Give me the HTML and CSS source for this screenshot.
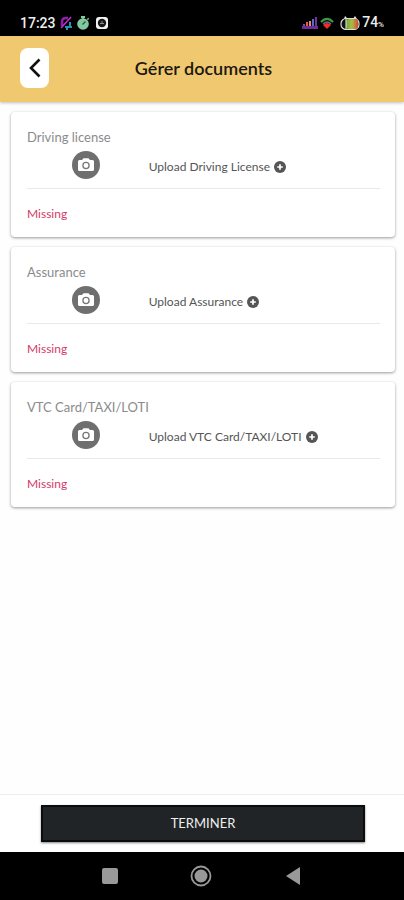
FILE: index.html
```html
<!DOCTYPE html>
<html lang="fr">
<head>
<meta charset="utf-8">
<meta name="viewport" content="width=device-width, initial-scale=1">
<title>Gérer documents</title>
<link rel="stylesheet" href="styles.css">
</head>
<body>
<svg class="symbols" aria-hidden="true">
  <symbol id="camera" viewBox="0 0 28 28">
    <circle cx="14" cy="14" r="14" fill="#6f6f6f"/>
    <path d="M7.500 9H10l1.500-1.800h5L18 9h2.500Q22 9 22 10.500v8q0 1.500-1.500 1.500h-13Q6 20 6 18.500v-8Q6 9 7.500 9z" fill="#fff"/>
    <circle cx="14" cy="14.500" r="3.100" fill="#fff" stroke="#777" stroke-width="1.300"/>
  </symbol>
  <symbol id="plus" viewBox="0 0 12 12">
    <circle cx="6" cy="6" r="6" fill="#555"/>
    <path d="M6 3.200v5.600M3.200 6h5.600" stroke="#fff" stroke-width="1.700"/>
  </symbol>
</svg>
<div class="status">
  <div class="status-group">
    <span class="time">17:23</span>
    <svg class="status-icon" viewBox="0 0 14 14"><path d="M3 10V6q0-4 4-4h2" fill="none" stroke="#8d20a8" stroke-width="2.600"/><path d="M6 11h5V6" fill="none" stroke="#2693b5" stroke-width="2"/><path d="M7 13h2M11 11h2" stroke="#2693b5" stroke-width="2"/><path d="M2 12 12 1" stroke="#c02fd8" stroke-width="1.500"/></svg>
    <svg class="status-icon" viewBox="0 0 14 14"><circle cx="7" cy="8" r="5.800" fill="#83c9a0"/><path d="M5 1h4M7 1v2M11.500 2.500l1 1" stroke="#83c9a0" stroke-width="1.800"/><path d="m6.500 8.500 3-3" stroke="#285f43" stroke-width="1.500"/></svg>
    <svg class="status-icon alarm" viewBox="0 0 14 14"><rect x="1" y="1" width="12" height="12" rx="3" fill="#f1f1f1"/><circle cx="7" cy="7" r="4.200" fill="#171717"/><path d="M5 7.500h4M7 5v2" stroke="#888"/></svg>
  </div>
  <div class="status-group status-right">
    <svg class="signal" viewBox="0 0 16 14"><path d="M0 11.500h16" stroke="#712a98" stroke-width="3"/><path d="M2 10V8" stroke="#8740ad" stroke-width="2"/><path d="M5 10V6" stroke="#e35a4d" stroke-width="2"/><path d="M8 10V5" stroke="#e98b62" stroke-width="2"/><path d="M11 10V3" stroke="#5368da" stroke-width="2"/><path d="M14 10V1" stroke="#713695" stroke-width="2"/></svg>
    <svg class="status-icon" viewBox="0 0 14 14"><path d="M1 6q6-6 12 0" fill="none" stroke="#3f9b3f" stroke-width="2.200"/><path d="M3 8q4-4 8 0" fill="none" stroke="#4b7295" stroke-width="1.600"/><path d="m7 13-4-4Q7 5 11 9z" fill="#ef2d26"/></svg>
    <svg class="battery" viewBox="0 0 20 14"><defs><linearGradient id="charge"><stop stop-color="#6fa832"/><stop offset=".5" stop-color="#a9bd45"/><stop offset="1" stop-color="#d94732"/></linearGradient></defs><path d="M4 3 5 0l3 3h5l2-3 2 3" fill="#eee"/><rect x="1" y="2.500" width="18" height="11" rx="5" fill="#111" stroke="#ddd" stroke-width="1.200"/><rect x="6" y="3" width="12" height="10" rx="2" fill="url(#charge)"/><path d="M6 3v10" stroke="#eee"/></svg>
    <span class="charge">74<small>%</small></span>
  </div>
</div>
<header class="header">
  <button class="back" type="button" aria-label="Retour"><svg viewBox="0 0 12 20"><path d="M10.500 1.500 2 10l8.500 8.500" fill="none" stroke="#111" stroke-width="2.600"/></svg></button>
  <h1>Gérer documents</h1>
</header>
<main class="documents">
  <section class="card">
    <h2>Driving license</h2>
    <div class="row">
      <svg class="camera" aria-hidden="true"><use href="#camera"/></svg>
      <button class="upload" type="button">Upload Driving License <svg aria-hidden="true"><use href="#plus"/></svg></button>
    </div>
    <p class="state">Missing</p>
  </section>
  <section class="card">
    <h2>Assurance</h2>
    <div class="row">
      <svg class="camera" aria-hidden="true"><use href="#camera"/></svg>
      <button class="upload" type="button">Upload Assurance <svg aria-hidden="true"><use href="#plus"/></svg></button>
    </div>
    <p class="state">Missing</p>
  </section>
  <section class="card">
    <h2>VTC Card/TAXI/LOTI</h2>
    <div class="row">
      <svg class="camera" aria-hidden="true"><use href="#camera"/></svg>
      <button class="upload" type="button">Upload VTC Card/TAXI/LOTI <svg aria-hidden="true"><use href="#plus"/></svg></button>
    </div>
    <p class="state">Missing</p>
  </section>
</main>
<footer class="footer"><button class="finish" type="button">TERMINER</button></footer>
<nav class="system-nav" aria-label="Système">
  <button type="button" aria-label="Applications récentes"><svg viewBox="0 0 22 22"><rect x="3" y="3" width="16" height="16" rx="2" fill="#999"/></svg></button>
  <button type="button" aria-label="Accueil"><svg viewBox="0 0 22 22"><circle cx="11" cy="11" r="9.500" fill="none" stroke="#999" stroke-width="1.800"/><circle cx="11" cy="11" r="6.500" fill="#999"/></svg></button>
  <button type="button" aria-label="Précédent"><svg viewBox="0 0 22 22"><path d="M4 11 18 2v18z" fill="#999"/></svg></button>
</nav>
</body>
</html>
```
FILE: styles.css
```css
* { box-sizing: border-box; }

body {
  margin: 0;
  min-height: 100vh;
  display: flex;
  flex-direction: column;
  background: #fefefe;
  font-family: Lato, "Open Sans", sans-serif;
}

button {
  border: 0;
  padding: 0;
  background: none;
  font: inherit;
  color: inherit;
}

h1, h2, p { margin: 0; }
svg { display: block; flex: none; }

.symbols {
  position: absolute;
  width: 0;
  height: 0;
}

.status {
  height: 36px;
  padding: 10px 20px 0;
  display: flex;
  justify-content: space-between;
  background: #000;
  color: #eee;
  font: 500 14px/26px Roboto, sans-serif;
}

.status-group {
  display: flex;
  align-items: center;
  gap: 3px;
}

.status-icon { width: 14px; height: 14px; }
.alarm { margin-left: 2px; }
.signal { width: 16px; height: 14px; }
.battery { width: 20px; height: 14px; margin-left: 4px; }
.status-right { gap: 2px; }
.charge small { font-size: 8px; }

.header {
  height: 66px;
  padding: 0 20px 2px;
  display: grid;
  grid-template-columns: 29px 1fr 26px;
  align-items: center;
  background: #f0c870;
  box-shadow: 0 1px 3px rgba(0, 0, 0, .25);
}

.back {
  height: 40px;
  display: grid;
  place-items: center;
  border-radius: 8px;
  background: #fff;
}

.back svg { width: 12px; height: 20px; }

.header h1 {
  font-size: 18px;
  font-weight: 600;
  line-height: 24px;
  text-align: center;
  color: #1b1710;
}

.documents {
  flex: 1;
  padding: 10px 9px 10px 11px;
  display: flex;
  flex-direction: column;
  gap: 10px;
}

.card {
  padding: 16px 15px 14px 16px;
  border-radius: 4px;
  background: #fff;
  box-shadow: 0 1px 3px rgba(0, 0, 0, .4);
}

.card h2 {
  font-size: 13px;
  font-weight: 400;
  line-height: 18px;
  color: #8b8b8b;
}

.row {
  padding: 5px 0 9px;
  display: grid;
  grid-template-columns: 1fr 2fr;
  align-items: center;
  border-bottom: 1px solid #e9e9e9;
}

.camera {
  width: 28px;
  height: 28px;
  justify-self: center;
}

.upload {
  padding: 3px 4px 0;
  display: flex;
  align-items: center;
  gap: 4px;
  font-size: 12px;
  line-height: 16px;
  color: #555;
}

.upload svg { width: 12px; height: 12px; }

.state {
  padding-top: 16px;
  font-size: 12px;
  line-height: 18px;
  color: #d33a66;
}

.footer {
  padding: 10px 39px 10px 41px;
  border-top: 1px solid #eee;
  background: #fff;
}

.finish {
  display: block;
  width: 100%;
  height: 37px;
  padding-bottom: 2px;
  border: 2px solid #0b0c0e;
  background: #212427;
  box-shadow: 0 1px 2px rgba(0, 0, 0, .5);
  color: #eee;
  font-size: 13px;
  line-height: 18px;
}

.system-nav {
  height: 48px;
  padding: 0 65px 0 64px;
  display: grid;
  grid-template-columns: repeat(3, 1fr);
  background: #000;
}

.system-nav button {
  display: grid;
  place-items: center;
}

.system-nav svg { width: 22px; height: 22px; }
```
